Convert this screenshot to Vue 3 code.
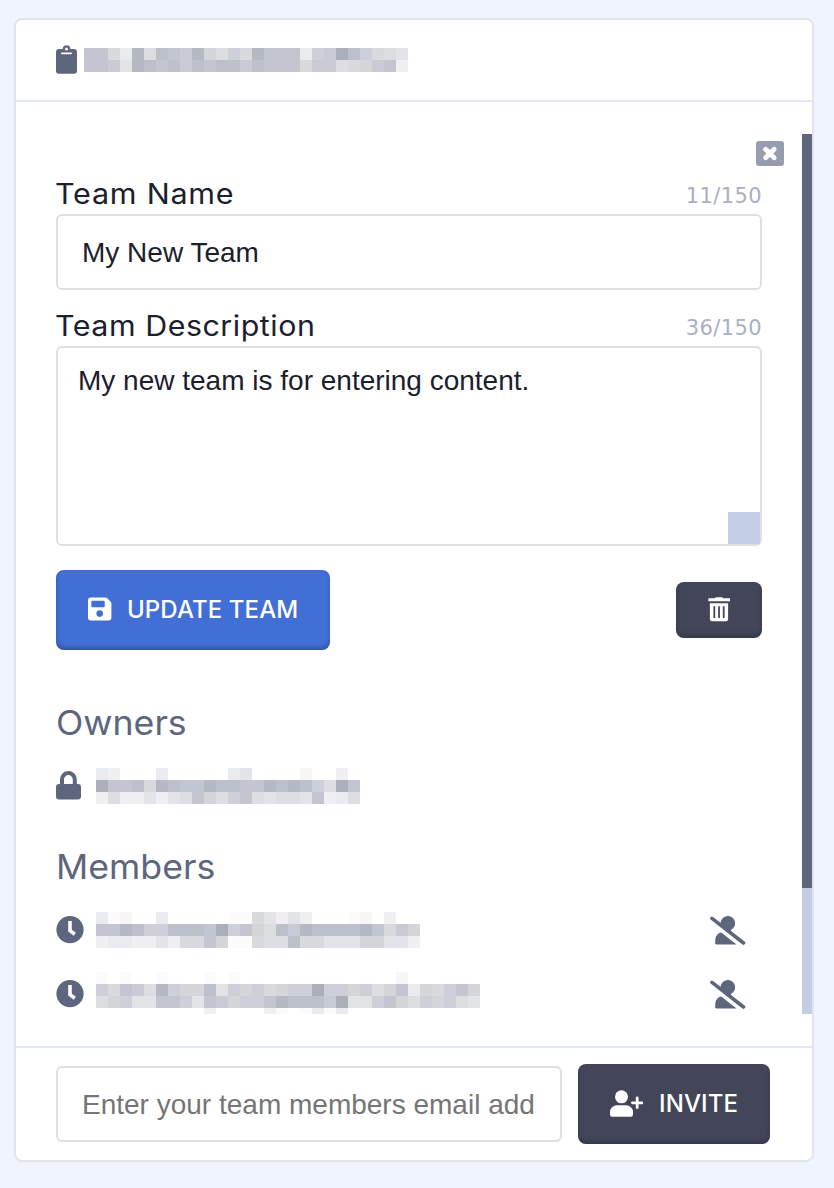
<script setup>
import { ref } from 'vue'

const name = ref('My New Team')
const description = ref('My new team is for entering content.')

// Shades used by the redaction mosaics, light to dark.
const shades = {
  0: '#ffffff', 1: '#fbfbfc', 2: '#f6f6f7', 3: '#f0f0f3', 4: '#eaebef',
  5: '#e3e4e8', 6: '#dddee2', 7: '#d8dade', 8: '#d4d6da', 9: '#cdd0d9',
  a: '#c8cbd3', b: '#c3c6d0', c: '#bcc0ca', d: '#b5b9c4', e: '#abafba',
}
const cells = (rows) => rows.join('').split('').map((k) => shades[k])

const title = cells(['bb74d6cbad8697dbbb49aec9765', 'bba5dcbcacbccacbbb7aa678ab3'])
const owner = cells(['4300040000045000020030', 'ebbc7dcbbdccbbdcdc96eb', '36335356b869b65665b346'])
const members = [
  {
    id: 'one',
    cells: cells(['412004000001175353000120300', 'bbdc99cccbe9b86cadccccdb7a8', '344335377b811766c7755588553']),
  },
  {
    id: 'two',
    cells: cells([
      '10100100010100000000000002000000',
      '97ba6d988c59897899e998968b4879b8',
      '68955bb95ba899bdcccae559b8698965',
      '00000000030000310141400000000000',
    ]),
  },
]
</script>

<template>
  <main class="page">
    <section class="card">
      <header class="head">
        <svg class="clip" viewBox="0 0 22 29" width="22" height="29">
          <path fill-rule="evenodd" d="M3 4h3.700a3.850 3.850 0 0 1 7.700 0h3.600a3 3 0 0 1 3 3v18.700a3 3 0 0 1-3 3H3a3 3 0 0 1-3-3V7a3 3 0 0 1 3-3zM10.500 2.500a1.500 1.500 0 1 0 0 3 1.500 1.500 0 0 0 0-3zM5.800 7.600a.8.8 0 0 0 0 1.600h9.400a.8.8 0 0 0 0-1.600z" />
        </svg>
        <div class="mosaic m-title"><i v-for="(c, i) in title" :key="i" :style="{ background: c }" /></div>
      </header>

      <div class="body">
        <div class="content">
          <div class="close-row">
            <button class="close" aria-label="Close">
              <svg viewBox="0 0 28 25" width="28" height="25">
                <path d="M9.600 8.300l8.600 8.400M18.200 8.300l-8.600 8.400" stroke="#fff" stroke-width="4.800" stroke-linecap="round" />
              </svg>
            </button>
          </div>
          <div class="label-row">
            <label class="label"><span class="l-name">Team Name</span></label>
            <span class="count">11/150</span>
          </div>
          <input v-model="name" class="field" type="text" />
          <div class="label-row second">
            <label class="label"><span class="l-desc">Team Description</span></label>
            <span class="count">36/150</span>
          </div>
          <div class="area-wrap">
            <textarea v-model="description" class="area" />
            <span class="grip" />
          </div>
          <div class="actions">
            <button class="btn update">
              <svg viewBox="0 0 24 24" width="24" height="24">
                <path fill-rule="evenodd" d="M3 .5h14.500a3 3 0 0 1 2 .9l3 3a3 3 0 0 1 .9 2V20.500a3 3 0 0 1-3 3H3a3 3 0 0 1-3-3V3.500a3 3 0 0 1 3-3zM4.300 3.700a1 1 0 0 0-1 1v4.600a1 1 0 0 0 1 1h11.400a1 1 0 0 0 1-1V4.700a1 1 0 0 0-1-1zM11.700 13.300a3.300 3.300 0 1 0 0 6.600 3.300 3.300 0 0 0 0-6.600z" />
              </svg>
              <span>UPDATE TEAM</span>
            </button>
            <button class="btn trash" aria-label="Delete team">
              <svg viewBox="0 0 22 25" width="22" height="25">
                <path d="M7 1.200Q7.400.3 8.400.3h5.200q1 0 1.400.9h6.800a.9.9 0 0 1 .9.9v1.300a.9.9 0 0 1-.9.9H1.200a.9.9 0 0 1-.9-.9V2.100a.9.9 0 0 1 .9-.9z" />
                <path fill-rule="evenodd" d="M1.900 6.200h18.200v15.900a2.200 2.200 0 0 1-2.200 2.200H4.100a2.200 2.200 0 0 1-2.200-2.200zM5.400 9.200v11.800h1.800V9.200zm4.700 0v11.800h1.800V9.200zm4.700 0v11.800h1.800V9.200z" />
              </svg>
            </button>
          </div>

          <h2 class="h-own"><span>Owners</span></h2>
          <div class="person owner">
            <svg viewBox="0 0 25 29" width="25" height="29">
              <path fill-rule="evenodd" d="M4 13V8.500a8.400 8.400 0 0 1 16.800 0V13H22a3 3 0 0 1 3 3v9.500a3 3 0 0 1-3 3H3a3 3 0 0 1-3-3V16a3 3 0 0 1 3-3zM8 13h8.800V8.500a4.400 4.400 0 0 0-8.800 0z" />
            </svg>
            <div class="mosaic m-owner"><i v-for="(c, i) in owner" :key="i" :style="{ background: c }" /></div>
          </div>

          <h2 class="h-mem"><span>Members</span></h2>
          <div v-for="m in members" :key="m.id" class="person member">
            <svg viewBox="0 0 28 28" width="28" height="28">
              <circle cx="14" cy="13.700" r="13.600" />
              <path d="M14 5v9.600l4.800 3.600" fill="none" stroke="#fff" stroke-width="3.600" />
            </svg>
            <div class="mosaic" :class="'m-' + m.id"><i v-for="(c, i) in m.cells" :key="i" :style="{ background: c }" /></div>
            <svg class="remove" viewBox="0 0 36 30" width="36" height="30">
              <path d="M10.500 7.500a7.300 7.300 0 1 1 10.500 6.400l-.8 2.100L10.800 9z" />
              <path d="M2 2.400L33.500 27" fill="none" stroke="#5d667d" stroke-width="3.600" stroke-linecap="round" />
              <path d="M11.300 16.600L26.500 28.500H6.500a1.300 1.300 0 0 1-1.300-1.300V25c0-4.700 2.500-7.900 6.100-8.400z" />
            </svg>
          </div>
        </div>
        <div class="track"><div class="thumb" /></div>
      </div>

      <footer class="foot">
        <input class="field" type="text" placeholder="Enter your team members email add" />
        <button class="btn invite">
          <svg viewBox="0 0 33 27" width="33" height="27">
            <circle cx="11.500" cy="6.800" r="6.500" />
            <path d="M7 15.200h9a7 7 0 0 1 7 7v2.300a2.200 2.200 0 0 1-2.200 2.200H2.200A2.200 2.200 0 0 1 0 24.500v-2.300a7 7 0 0 1 7-7z" />
            <path d="M27.200 8v9.600M22.400 12.800H32" stroke="#fff" stroke-width="2.800" stroke-linecap="round" />
          </svg>
          <span>INVITE</span>
        </button>
      </footer>
    </section>
  </main>
</template>

<style>
body { background: #f0f4fe; }
</style>

<style scoped>
* { box-sizing: border-box; }
.page { height: 1188px; padding: 18px 20px 26px 14px; background: #f0f4fe; font-family: Inter, sans-serif; }
svg { display: block; flex: none; fill: #5d667d; }
.card { height: 1144px; background: #fff; border: 2px solid #e2e4e7; border-radius: 8px; display: flex; flex-direction: column; }
.head { height: 82px; flex: none; border-bottom: 2px solid #e0e7fb; padding: 25px 40px 0; display: flex; gap: 6px; }
.mosaic { display: grid; grid-auto-rows: 12px; flex: none; }
.m-title { grid-template-columns: repeat(27, 12px); margin-top: 3px; height: 24px; }
.m-owner { grid-template-columns: repeat(22, 12px); }
.m-one { grid-template-columns: repeat(27, 12px); }
.m-two { grid-template-columns: repeat(32, 12px); grid-template-rows: 12px 12px 12px 8px; }
.body { flex: 1; min-height: 0; display: flex; padding: 32px 0; }
.content { flex: 1; padding: 0 40px; overflow: hidden; }
.track { width: 10px; flex: none; background: #c3cde6; }
.thumb { height: 754px; background: #5d667d; }
.close-row { display: flex; justify-content: flex-end; padding-top: 7px; margin-right: -22px; }
.close { padding: 0; border: 0; border-radius: 3px; background: #959daf; width: 28px; height: 25px; }
.label-row { display: flex; justify-content: space-between; width: 706px; height: 48px; padding-top: 10px; line-height: 36px; }
.second { height: 56px; padding-top: 18px; }
.label { font-size: 28px; font-weight: 400; color: #1b202d; white-space: nowrap; }
/* Inter stretched a little towards wide geometric proportions */
.label span, h2 span { display: inline-block; transform-origin: 0 50%; }
.l-name { letter-spacing: .7px; transform: translateX(-1px) scaleX(1.09); }
.l-desc { letter-spacing: .5px; transform: translateX(-1px) scaleX(1.085); }
.count { font: 21px/40px "DejaVu Sans", sans-serif; letter-spacing: .4px; color: #a9b0c4; }
.field, .area { font-family: "Liberation Sans", Arial, sans-serif; font-size: 28px; color: #1b202d; background: #fff; border: 2px solid #e0e0e0; border-radius: 6px; outline: 0; display: block; width: 706px; margin: 0; }
.field { height: 76px; padding: 2px 24px 0; }
.field::placeholder { color: #757575; opacity: 1; }
.area-wrap { position: relative; width: 706px; }
.area { height: 200px; padding: 17px 20px; line-height: 32px; resize: none; overflow: hidden; }
.grip { position: absolute; right: 2px; bottom: 2px; width: 32px; height: 32px; background: #c3cde6; }
.actions { width: 706px; height: 80px; margin-top: 24px; display: flex; align-items: center; justify-content: space-between; }
.btn { border: 0; margin: 0; border-radius: 8px; background: #424658; color: #fff; font: 500 24px/30px Inter, sans-serif; letter-spacing: .1px; display: flex; align-items: center; white-space: nowrap; box-shadow: inset 0 -3px 4px rgba(20, 25, 60, .3); }
.btn svg { fill: #fff; }
.btn span { position: relative; top: 1px; }
.update { width: 274px; height: 80px; padding: 0 0 2px 32px; gap: 15px; background: #426fd5; }
.trash { width: 86px; height: 56px; padding: 0 0 1px; justify-content: center; }
.invite { width: 192px; height: 80px; padding: 0 0 2px 32px; gap: 16px; }
h2 { margin: 0; font-size: 34px; font-weight: 400; line-height: 46px; color: #5d667d; }
h2 span { transform: scaleX(1.05); }
.h-own { margin-top: 50px; }
.h-mem { margin-top: 40px; }
.person { display: flex; align-items: flex-start; }
.owner { height: 36px; margin-top: 22px; gap: 15px; }
.owner svg { margin-top: 3px; }
.member { height: 36px; gap: 12px; margin-top: 22px; width: 690px; }
.member svg { margin-top: 4px; }
.member .remove { margin: 4px 0 0 auto; }
.member + .member { height: 44px; margin-top: 24px; }
.member + .member svg { margin-top: 8px; }
.foot { height: 114px; flex: none; border-top: 2px solid #dfe8fb; padding: 16px 42px 0 40px; display: flex; gap: 16px; }
.foot .field { width: 506px; margin-top: 2px; }
</style>
